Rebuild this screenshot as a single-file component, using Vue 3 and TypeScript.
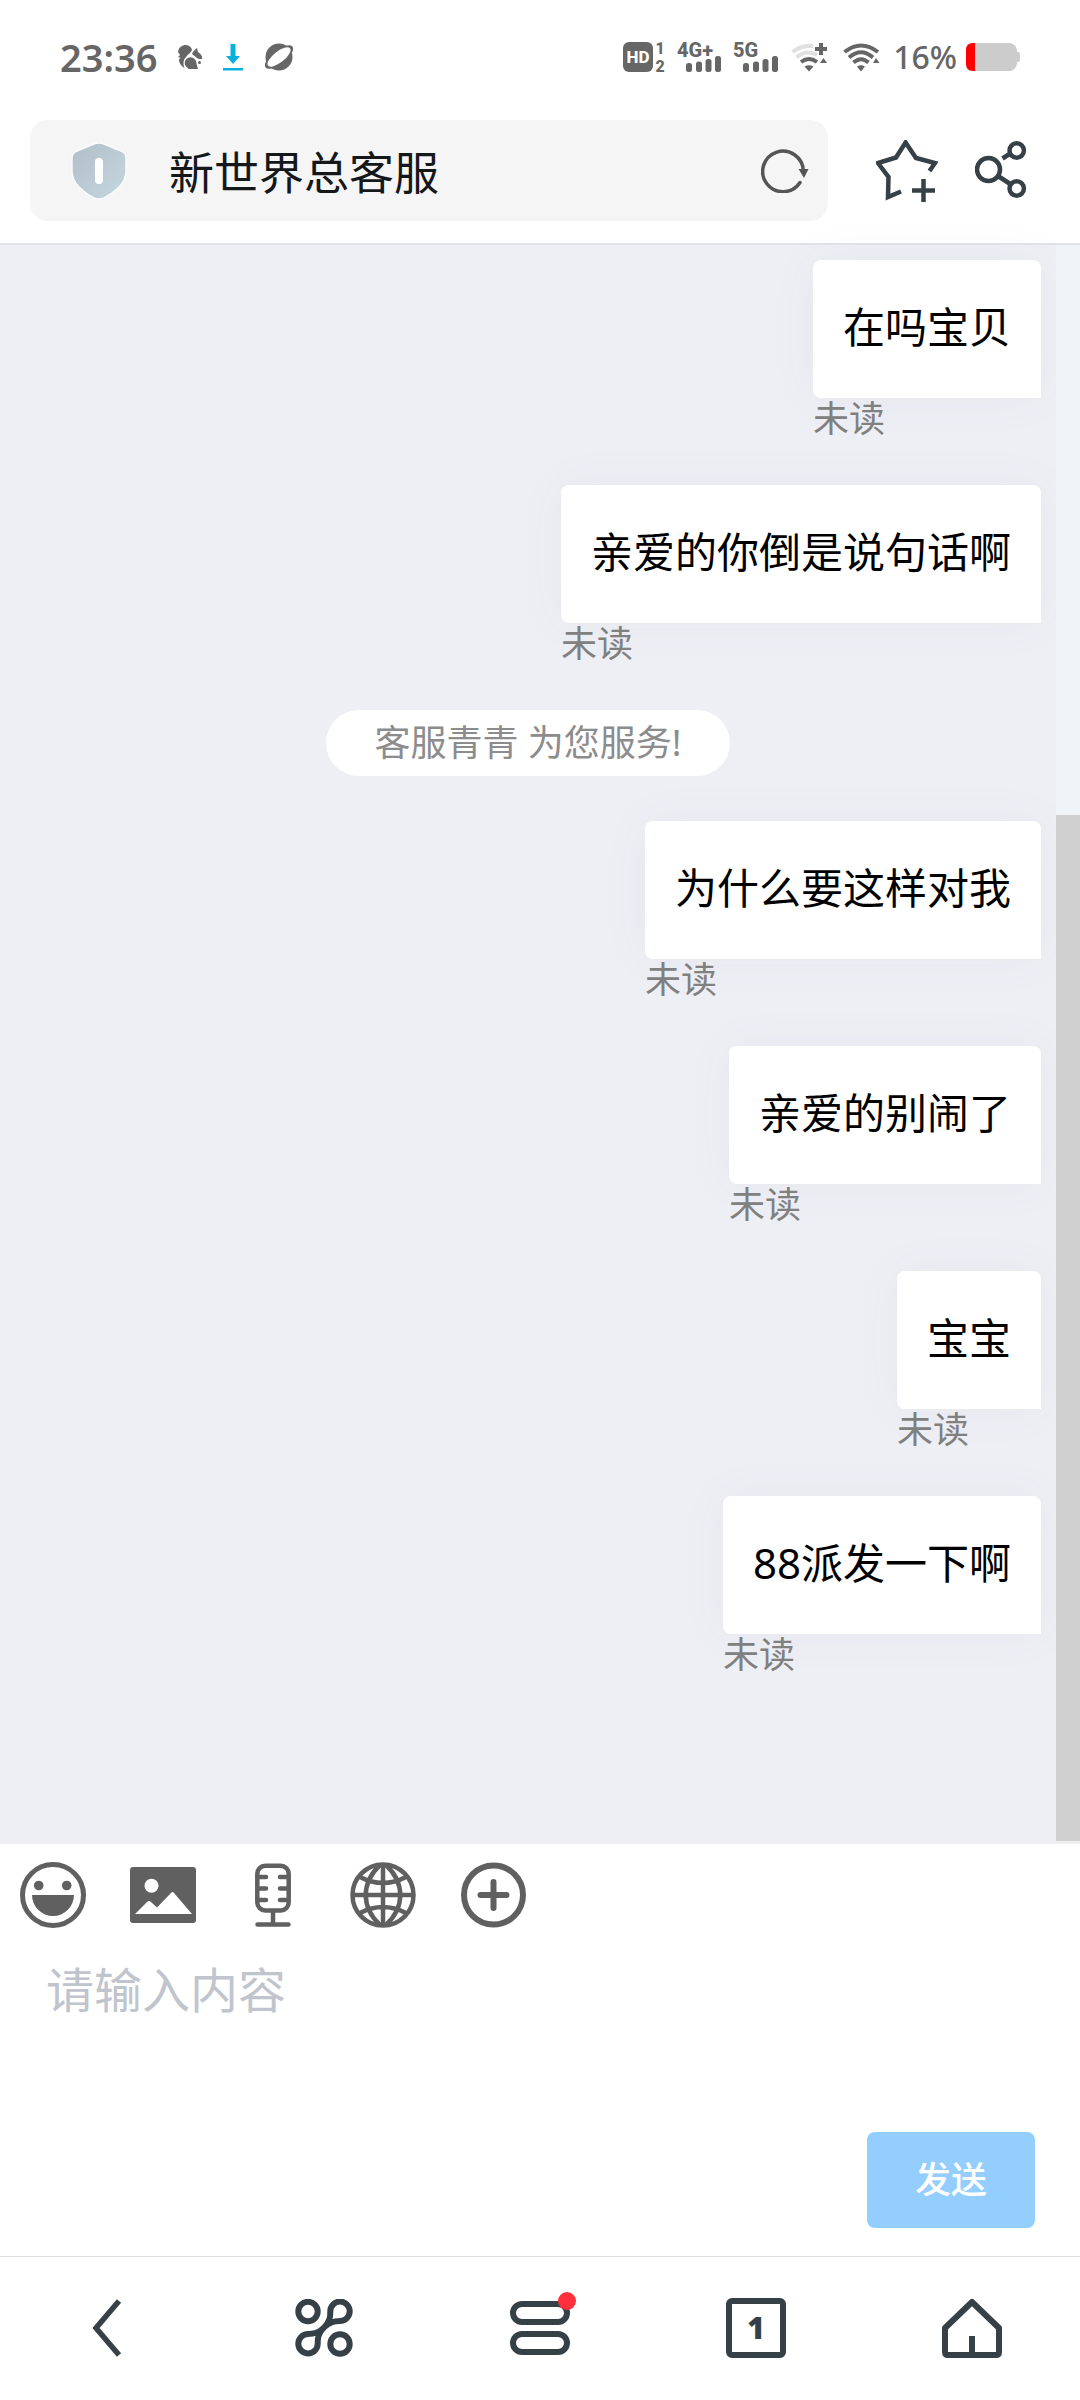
<script setup lang="ts">
import { ref } from 'vue'

interface Entry {
  id: number
  kind: 'mine' | 'notice'
  text: string
}

const entries: Entry[] = [
  { id: 1, kind: 'mine', text: '在吗宝贝' },
  { id: 2, kind: 'mine', text: '亲爱的你倒是说句话啊' },
  { id: 3, kind: 'notice', text: '客服青青 为您服务!' },
  { id: 4, kind: 'mine', text: '为什么要这样对我' },
  { id: 5, kind: 'mine', text: '亲爱的别闹了' },
  { id: 6, kind: 'mine', text: '宝宝' },
  { id: 7, kind: 'mine', text: '88派发一下啊' },
]

const draft = ref('')
</script>

<template>
  <div class="page">
    <header class="top">
      <div class="status">
        <div class="status-left">
          <span class="clock">23:36</span>
          <svg width="24" height="24" viewBox="0 0 24 24" fill="#666">
            <path d="M0 7C1 2 4 0 8 0C11 0 14 3 14 5C13 8 10 9 8 12C5 15 5 19 6.500 23C2 20 1 17 1 14L3 13L0 12L2 10Z" />
            <path d="M19 3L20 7C23 9 25 12 24 14L21 14L19 13L14 9C15 6 17 5 19 3Z" />
            <circle cx="12.500" cy="18" r="5.800" />
            <path d="M12 20L18 17L20 24H10Z" />
            <circle cx="21.500" cy="17.500" r="1.500" />
          </svg>
          <svg width="20" height="27" viewBox="0 0 20 27" fill="#07b1d9">
            <path d="M7.500 0h5v12h4.500L10 20L3 12h4.500ZM0 24h20v2.500H0Z" />
          </svg>
          <svg width="30" height="28" viewBox="0 0 30 28" fill="#666">
            <circle cx="15" cy="14" r="13.500" />
            <ellipse cx="15" cy="14" rx="17" ry="7" transform="rotate(-38 15 14)" />
            <ellipse cx="15" cy="14" rx="14" ry="5.500" transform="rotate(-38 15 14)" fill="#fff" />
          </svg>
        </div>
        <div class="status-right">
          <svg width="42" height="38" viewBox="0 -4 42 38" fill="#666" class="glyph">
            <rect width="30" height="30" rx="6" />
            <text x="15" y="21" text-anchor="middle" font-size="17" fill="#fff">HD</text>
            <text x="37" y="12" text-anchor="middle" font-size="16">1</text>
            <text x="37" y="30" text-anchor="middle" font-size="16">2</text>
          </svg>
          <svg width="44" height="38" viewBox="0 -4 44 38" fill="#666" class="glyph">
            <text x="0" y="15" font-size="20">4G+</text>
            <rect x="9" y="21" width="6" height="9" rx="2.500" />
            <rect x="19" y="19.500" width="6" height="10.500" rx="2.500" />
            <rect x="28.500" y="17" width="6" height="13" rx="2.500" />
            <rect x="38" y="14" width="6" height="16" rx="2.500" />
          </svg>
          <svg width="46" height="38" viewBox="0 -4 46 38" fill="#666" class="glyph">
            <text x="0" y="15" font-size="20">5G</text>
            <rect x="10" y="21" width="6" height="9" rx="2.500" />
            <rect x="20" y="19.500" width="6" height="10.500" rx="2.500" />
            <rect x="29.500" y="17" width="6" height="13" rx="2.500" />
            <rect x="39" y="14" width="6" height="16" rx="2.500" />
          </svg>
          <svg width="40" height="30" viewBox="0 0 40 30" fill="none" stroke-width="4">
            <path d="M1.500 10Q10 3 22 4M5.500 15.500Q15 7 26 13" stroke="#e0e0e0" />
            <path d="M10 20Q18 14 26 20" stroke="#666" />
            <path d="M30 1v12M24 7h12" stroke="#666" />
            <path d="M13.500 24.500Q18 22 22.500 24.500L18 29.500ZM32.500 16L36 21H29Z" fill="#666" />
          </svg>
          <svg width="38" height="30" viewBox="0 0 38 30" fill="none" stroke-width="4">
            <path d="M1.500 10Q18 -3 35 10M6 15.500Q18 5 30 15.500M10.500 20.500Q18 14 25.500 20.500" stroke="#666" />
            <path d="M14 24.500Q18 22 22 24.500L18 29.500ZM33 16L36.500 21H30Z" fill="#666" />
          </svg>
          <div class="power">
            <span class="percent">16%</span>
            <svg width="54" height="28" viewBox="0 0 54 28">
              <rect width="51" height="28" rx="8" fill="#ccc" />
              <rect x="49" y="9" width="5" height="10" rx="2" fill="#ccc" />
              <path d="M9 0H7Q0 0 0 7V21Q0 28 7 28H9Z" fill="#f00" />
            </svg>
          </div>
        </div>
      </div>

      <div class="toolbar">
        <div class="address">
          <svg class="shield" width="56" height="58" viewBox="0 0 56 58">
            <defs>
              <linearGradient id="shieldFill" x1="0" y1="0" x2="1" y2="1">
                <stop offset="0" stop-color="#afbec7" />
                <stop offset="1" stop-color="#c7d7e0" />
              </linearGradient>
            </defs>
            <path d="M23 2Q28 0 33 2L50 9Q55 11 55 16V29Q55 38 48 45Q41 52 33 56Q28 58 23 56Q15 52 8 45Q1 38 1 29V16Q1 11 6 9Z" fill="url(#shieldFill)" stroke="#f8fcff" stroke-width="1.500" />
            <rect x="24" y="16" width="8" height="26" rx="4" fill="#fff" />
          </svg>
          <h1 class="title">新世界总客服</h1>
          <button class="plain" type="button" aria-label="刷新">
            <svg width="48" height="44" viewBox="0 0 48 44">
              <path d="M42.300 22A20.300 20.300 0 1 0 39 33.500" fill="none" stroke="#555" stroke-width="3.500" stroke-linecap="round" />
              <path d="M37.500 20H47.500L43 29Z" fill="#555" />
            </svg>
          </button>
        </div>
        <button class="plain star" type="button" aria-label="收藏">
          <svg width="62" height="62" viewBox="0 0 62 62" fill="none" stroke="#364147" stroke-width="4.500">
            <path d="M53.500 31L59 23L40 18L29.600 2.500L20 17.500L2 23L12.500 37L12 57L25 51.500" />
            <path d="M47.500 39v23M36 50.500h23" />
          </svg>
        </button>
        <button class="plain" type="button" aria-label="分享">
          <svg width="52" height="60" viewBox="0 0 52 60" fill="none" stroke="#364147" stroke-width="4.500">
            <circle cx="13.500" cy="28.500" r="11.500" />
            <circle cx="41.700" cy="9.500" r="7.200" />
            <circle cx="41.700" cy="47.500" r="7.200" />
            <path d="M27.500 17.500L36 12M23 35L36 43.500" />
          </svg>
        </button>
      </div>
    </header>

    <main class="chat">
      <div class="messages">
        <template v-for="entry in entries" :key="entry.id">
          <p v-if="entry.kind === 'notice'" class="notice">{{ entry.text }}</p>
          <div v-else class="message">
            <p class="bubble">{{ entry.text }}</p>
            <span class="state">未读</span>
          </div>
        </template>
      </div>
      <div class="track"><div class="thumb"></div></div>
    </main>

    <form class="composer" @submit.prevent>
      <div class="tools">
        <button class="plain" type="button" aria-label="表情">
          <svg width="66" height="66" viewBox="0 0 66 66" fill="#606060">
            <circle cx="33" cy="33" r="30.500" fill="none" stroke="#606060" stroke-width="5" />
            <circle cx="18.700" cy="23.500" r="4.800" />
            <circle cx="46.700" cy="23.500" r="4.800" />
            <path d="M12 33H54A21 21 0 0 1 12 33Z" />
          </svg>
        </button>
        <button class="plain" type="button" aria-label="图片">
          <svg width="66" height="66" viewBox="0 0 66 66">
            <rect y="5" width="66" height="56" rx="3" fill="#606060" />
            <circle cx="21.500" cy="23.700" r="7" fill="#fff" />
            <path d="M5 52L17 40Q19 38 21 40L27 45.500L41 31Q42.500 29 44 31L62 52Z" fill="#fff" />
          </svg>
        </button>
        <button class="plain" type="button" aria-label="语音">
          <svg width="66" height="66" viewBox="0 0 66 66" fill="none" stroke="#606060" stroke-width="4.500" stroke-linecap="round">
            <rect x="17.300" y="3.800" width="31.400" height="44.700" rx="8" />
            <path d="M18 15h8M18 26.500h8M18 38h8M40 15h8M40 26.500h8M40 38h8M33 49v12M17.500 62.500h31" />
          </svg>
        </button>
        <button class="plain" type="button" aria-label="语言">
          <svg width="66" height="66" viewBox="0 0 66 66" fill="none" stroke="#606060" stroke-width="4.500">
            <circle cx="33" cy="33" r="30.500" />
            <path d="M33 2v62M2 33h62M10 15Q33 27 56 15M10 51Q33 39 56 51" />
            <path d="M30 3C11 21 11 45 30 63M36 3C55 21 55 45 36 63" />
          </svg>
        </button>
        <button class="plain" type="button" aria-label="更多">
          <svg width="66" height="66" viewBox="0 0 66 66" fill="none" stroke="#606060" stroke-width="6" stroke-linecap="round">
            <circle cx="33.500" cy="33" r="29.500" />
            <path d="M33.500 20v26M20.500 33h26" />
          </svg>
        </button>
      </div>
      <textarea v-model="draft" class="input" placeholder="请输入内容" aria-label="请输入内容"></textarea>
      <button class="send" type="submit">发送</button>
    </form>

    <nav class="nav">
      <button class="plain" type="button" aria-label="返回">
        <svg width="30" height="60" viewBox="0 0 30 60" fill="none" stroke="#364147" stroke-width="5.500">
          <path d="M26 3L3 30L26 57" />
        </svg>
      </button>
      <button class="plain" type="button" aria-label="应用">
        <svg width="58" height="58" viewBox="0 0 58 58" fill="none" stroke="#364147" stroke-width="6">
          <circle cx="13" cy="12.500" r="9.700" />
          <circle cx="45" cy="45" r="9.700" />
          <path d="M29 28.500C35.500 22 35.300 17 35.300 12.500A9.700 9.700 0 1 1 45 22C41 22 35.500 22 29 28.500C22.500 35 22.700 40 22.700 45A9.700 9.700 0 1 1 13 35C17 35 22.500 35 29 28.500Z" />
        </svg>
      </button>
      <button class="plain menu" type="button" aria-label="菜单">
        <svg width="60" height="54" viewBox="0 0 60 54" fill="none" stroke="#364147" stroke-width="6">
          <rect x="3" y="3" width="54" height="18" rx="9" />
          <rect x="3" y="33" width="54" height="18" rx="9" />
        </svg>
        <span class="dot"></span>
      </button>
      <button class="tabs" type="button">1</button>
      <button class="plain" type="button" aria-label="主页">
        <svg width="60" height="60" viewBox="0 0 60 60" fill="none" stroke="#364147" stroke-width="6" stroke-linejoin="round">
          <path d="M30 4L3 30V54Q3 57 6 57H54Q57 57 57 54V30ZM30 38V57" />
        </svg>
      </button>
    </nav>
  </div>
</template>

<style>
body {
  background: #fff;
}
</style>

<style scoped>
.page {
  display: flex;
  flex-direction: column;
  min-height: 100vh;
  background: #fff;
  font-family: "Noto Sans", "Noto Sans CJK SC", sans-serif;
}

svg {
  display: block;
  flex: none;
}

.plain {
  padding: 0;
  border: 0;
  background: none;
}

.top {
  border-bottom: 2px solid #e1e3e8;
}

.status {
  display: flex;
  justify-content: space-between;
  align-items: center;
  height: 114px;
  padding: 0 60px;
  color: #666;
}

.status-left {
  display: flex;
  align-items: center;
  gap: 21px;
}

.status-right {
  display: flex;
  align-items: center;
  gap: 12px;
}

.power {
  display: flex;
  align-items: center;
  gap: 9px;
}

.clock {
  font-size: 38px;
  font-weight: 600;
  line-height: 48px;
}

.percent {
  font-size: 32px;
  font-weight: 500;
  line-height: 48px;
}

.glyph {
  font-family: Roboto, sans-serif;
  font-weight: 800;
}

.toolbar {
  display: flex;
  align-items: center;
  padding: 6px 53px 22px 30px;
}

.address {
  display: flex;
  flex: 1;
  align-items: center;
  height: 101px;
  padding: 0 19px 0 41px;
  border-radius: 18px;
  background: #f5f5f5;
}

.title {
  flex: 1;
  margin: 0 0 0 42px;
  color: #14181a;
  font-family: "Noto Sans CJK SC", sans-serif;
  font-size: 45px;
  font-weight: 400;
  line-height: 60px;
}

.star {
  margin: 0 37px 0 48px;
}

.chat {
  display: flex;
  flex: 1;
  border-bottom: 3px solid #efeff0;
  background: #eeeff5;
}

.messages {
  display: flex;
  flex: 1;
  flex-direction: column;
  gap: 45px;
  padding: 15px 15px 0 0;
}

.message {
  display: flex;
  flex-direction: column;
  align-self: flex-end;
}

.bubble {
  margin: 0;
  padding: 37px 30px 41px;
  border-radius: 8px 8px 0 8px;
  background: #fff;
  box-shadow: 0 0 48px rgba(90, 90, 110, 0.05);
  color: #000;
  font-size: 42px;
  line-height: 60px;
}

.state {
  color: #808080;
  font-size: 36px;
  line-height: 42px;
}

.notice {
  align-self: center;
  margin: 0 0 0 15px;
  padding: 0 48px;
  border-radius: 33px;
  background: #fff;
  color: #8c8c8c;
  font-size: 36px;
  line-height: 66px;
}

.track {
  display: flex;
  flex-direction: column;
  justify-content: flex-end;
  width: 24px;
  background: #eff4f8;
}

.thumb {
  height: 64.3%;
  background: #d0d0d0;
}

.composer {
  display: flex;
  flex-direction: column;
  padding: 18px 0 28px;
}

.tools {
  display: flex;
  gap: 44px;
  padding: 0 20px;
}

.input {
  height: 204px;
  box-sizing: border-box;
  padding: 32px 46px;
  border: 0;
  outline: 0;
  resize: none;
  background: none;
  color: #303133;
  font-family: "Noto Sans", "Noto Sans CJK SC", sans-serif;
  font-size: 48px;
  line-height: 60px;
}

.input::placeholder {
  color: #c0c4cc;
  opacity: 1;
}

.send {
  align-self: flex-end;
  width: 168px;
  height: 96px;
  margin-right: 45px;
  padding: 0 0 6px;
  border: 0;
  border-radius: 8px;
  background: #93ceff;
  color: #fff;
  font-family: "Noto Sans CJK SC", sans-serif;
  font-size: 36px;
  font-weight: 500;
}

.nav {
  display: grid;
  grid-template-columns: repeat(5, 1fr);
  place-items: center;
  height: 141px;
  padding-bottom: 2px;
  border-top: 1px solid #dcdfe0;
}

.menu {
  position: relative;
}

.dot {
  position: absolute;
  top: -9px;
  right: -6px;
  width: 18px;
  height: 18px;
  border-radius: 50%;
  background: #ff2f3c;
}

.tabs {
  width: 60px;
  height: 60px;
  padding: 0;
  border: 6px solid #364147;
  border-radius: 6px;
  background: none;
  color: #364147;
  font-family: "Open Sans", sans-serif;
  font-size: 30px;
  font-weight: 800;
  line-height: 48px;
}
</style>
